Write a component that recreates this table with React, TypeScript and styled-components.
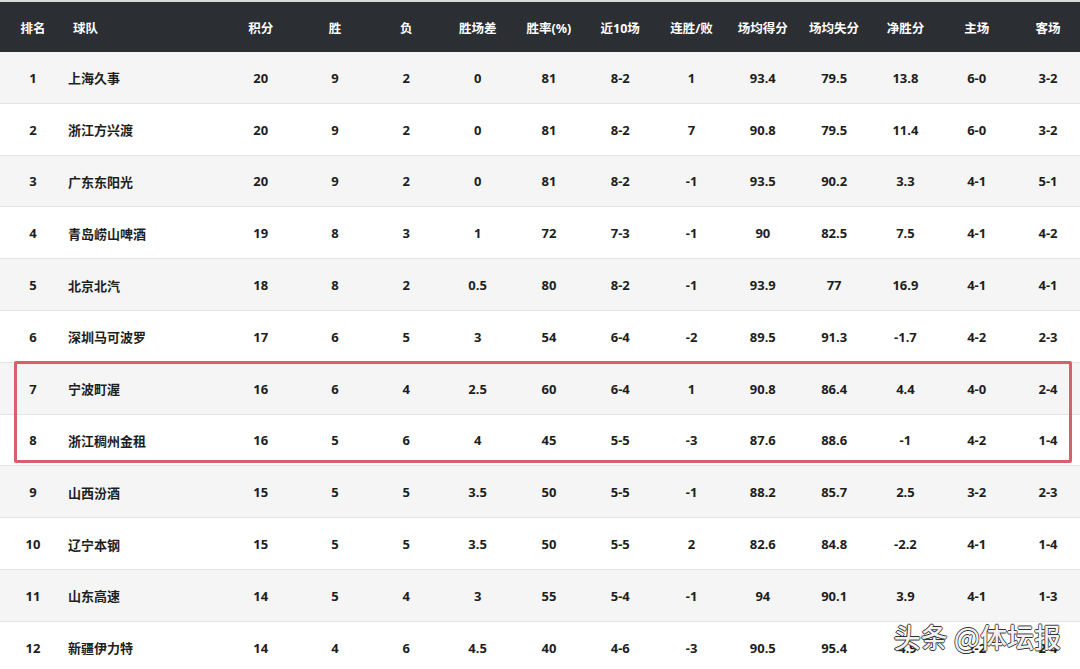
import React from 'react';
import styled, { createGlobalStyle } from 'styled-components';

const GlobalStyle = createGlobalStyle`
  html, body {
    margin: 0;
    padding: 0;
    background: #ffffff;
    overflow: hidden;
  }
  body {
    font-family: "Noto Sans", "Noto Sans CJK SC", sans-serif;
  }
`;

const COLS = '66px 156px 77.4px repeat(11, 71.3px)';

const Page = styled.div`
  position: relative;
  width: 1080px;
  height: 669px;
  overflow: hidden;
  background: #ffffff;
  border-top: 2px solid #d8d9db;
`;

const Table = styled.div`
  width: 1084px;
`;

const HeaderRow = styled.div`
  display: grid;
  grid-template-columns: ${COLS};
  height: 50px;
  align-items: center;
  background: #2b2e33;
  color: #ffffff;
  font-size: 12.5px;
  font-weight: 700;
`;

const Row = styled.div<{ $alt: boolean }>`
  display: grid;
  grid-template-columns: ${COLS};
  height: 51.8px;
  box-sizing: border-box;
  align-items: center;
  background: ${(p) => (p.$alt ? '#f5f5f5' : '#ffffff')};
  border-bottom: 1px solid #e4e4e4;
  color: #1e1e1e;
  font-size: 13px;
  font-weight: 700;
  padding-top: 1px;
`;

const Cell = styled.div<{ $left?: boolean; $pad?: number }>`
  text-align: ${(p) => (p.$left ? 'left' : 'center')};
  padding-left: ${(p) => (p.$pad ? `${p.$pad}px` : '0')};
  white-space: nowrap;
`;

const Highlight = styled.div`
  position: relative;

  &::after {
    content: '';
    position: absolute;
    left: 14px;
    right: 12px;
    top: -2px;
    bottom: 3px;
    border: 3px solid #d8606a;
    border-radius: 2px;
    pointer-events: none;
  }
`;

const Watermark = styled.div`
  position: absolute;
  right: 19px;
  bottom: 15px;
  font-family: "Noto Sans CJK SC", sans-serif;
  font-size: 27px;
  font-weight: 500;
  color: rgba(255, 255, 255, 0.95);
  text-shadow:
    0.8px 0 0 #333,
    -0.8px 0 0 #333,
    0 0.8px 0 #333,
    0 -0.8px 0 #333;
  white-space: nowrap;
`;

const headers = ['排名', '球队', '积分', '胜', '负', '胜场差', '胜率(%)', '近10场', '连胜/败', '场均得分', '场均失分', '净胜分', '主场', '客场'];

type Team = (string | number)[];

const teams: Team[] = [
  [1, '上海久事', 20, 9, 2, 0, 81, '8-2', 1, 93.4, 79.5, 13.8, '6-0', '3-2'],
  [2, '浙江方兴渡', 20, 9, 2, 0, 81, '8-2', 7, 90.8, 79.5, 11.4, '6-0', '3-2'],
  [3, '广东东阳光', 20, 9, 2, 0, 81, '8-2', -1, 93.5, 90.2, 3.3, '4-1', '5-1'],
  [4, '青岛崂山啤酒', 19, 8, 3, 1, 72, '7-3', -1, 90, 82.5, 7.5, '4-1', '4-2'],
  [5, '北京北汽', 18, 8, 2, 0.5, 80, '8-2', -1, 93.9, 77, 16.9, '4-1', '4-1'],
  [6, '深圳马可波罗', 17, 6, 5, 3, 54, '6-4', -2, 89.5, 91.3, -1.7, '4-2', '2-3'],
  [7, '宁波町渥', 16, 6, 4, 2.5, 60, '6-4', 1, 90.8, 86.4, 4.4, '4-0', '2-4'],
  [8, '浙江稠州金租', 16, 5, 6, 4, 45, '5-5', -3, 87.6, 88.6, -1, '4-2', '1-4'],
  [9, '山西汾酒', 15, 5, 5, 3.5, 50, '5-5', -1, 88.2, 85.7, 2.5, '3-2', '2-3'],
  [10, '辽宁本钢', 15, 5, 5, 3.5, 50, '5-5', 2, 82.6, 84.8, -2.2, '4-1', '1-4'],
  [11, '山东高速', 14, 5, 4, 3, 55, '5-4', -1, 94, 90.1, 3.9, '4-1', '1-3'],
  [12, '新疆伊力特', 14, 4, 6, 4.5, 40, '4-6', -3, 90.5, 95.4, -4.9, '2-2', '2-4'],
];

const TeamRow: React.FC<{ team: Team; index: number }> = ({ team, index }) => (
  <Row $alt={index % 2 === 0}>
    {team.map((v, i) => (
      <Cell key={i} $left={i === 1} $pad={i === 1 ? 2 : 0}>
        {v}
      </Cell>
    ))}
  </Row>
);

export default function App() {
  return (
    <>
      <GlobalStyle />
      <Page>
        <Table>
          <HeaderRow>
            {headers.map((h, i) => (
              <Cell key={h} $left={i === 1} $pad={i === 1 ? 7 : 0}>
                {h}
              </Cell>
            ))}
          </HeaderRow>
          {teams.slice(0, 6).map((t, i) => (
            <TeamRow key={i} team={t} index={i} />
          ))}
          <Highlight>
            {teams.slice(6, 8).map((t, i) => (
              <TeamRow key={i} team={t} index={i + 6} />
            ))}
          </Highlight>
          {teams.slice(8).map((t, i) => (
            <TeamRow key={i} team={t} index={i + 8} />
          ))}
        </Table>
        <Watermark>头条 @体坛报</Watermark>
      </Page>
    </>
  );
}
